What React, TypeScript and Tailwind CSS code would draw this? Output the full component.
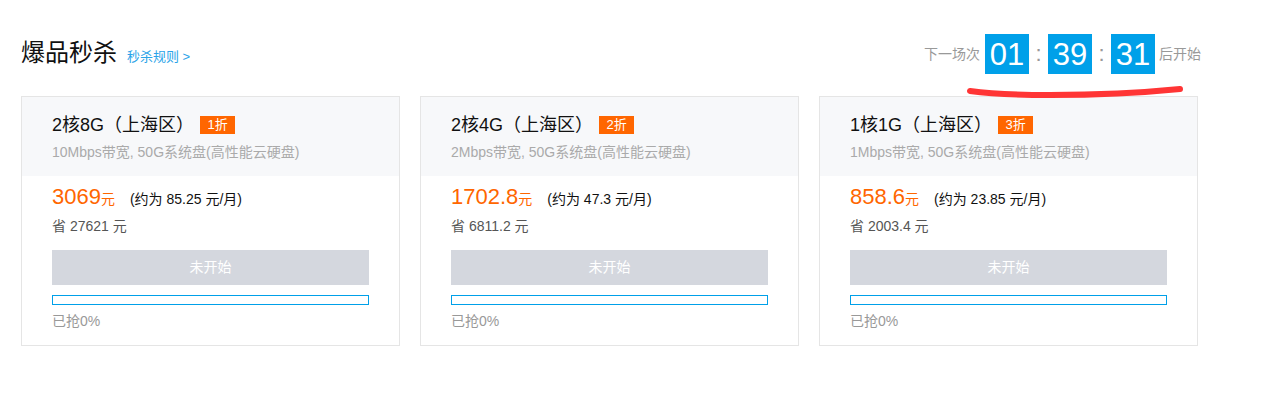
import React from 'react'

interface Deal {
  title: string
  discount: string
  spec: string
  price: string
  monthly: string
  saved: string
}

const deals: Deal[] = [
  {
    title: '2核8G（上海区）',
    discount: '1折',
    spec: '10Mbps带宽, 50G系统盘(高性能云硬盘)',
    price: '3069',
    monthly: '(约为 85.25 元/月)',
    saved: '省 27621 元',
  },
  {
    title: '2核4G（上海区）',
    discount: '2折',
    spec: '2Mbps带宽, 50G系统盘(高性能云硬盘)',
    price: '1702.8',
    monthly: '(约为 47.3 元/月)',
    saved: '省 6811.2 元',
  },
  {
    title: '1核1G（上海区）',
    discount: '3折',
    spec: '1Mbps带宽, 50G系统盘(高性能云硬盘)',
    price: '858.6',
    monthly: '(约为 23.85 元/月)',
    saved: '省 2003.4 元',
  },
]

function TimeBox({ value }: { value: string }) {
  return (
    <div className="flex h-[40px] w-[44px] items-center justify-center bg-[#00a0e9] text-[31px] leading-none text-white">
      {value}
    </div>
  )
}

function Colon() {
  return <span className="w-[19px] text-center text-[22px] leading-none text-[#999]">:</span>
}

function DealCard({ deal }: { deal: Deal }) {
  return (
    <div className="w-[379px] border border-[#e5e5e5] bg-white">
      {/* Header */}
      <div className="h-[79px] bg-[#f7f8fa] px-[30px] pt-[16px]">
        <div className="flex h-[24px] items-center">
          <span className="text-[18px] text-[#111]">{deal.title}</span>
          <span className="ml-[6px] flex h-[18px] w-[35px] items-center justify-center bg-[#ff6600] text-[13px] text-white">
            {deal.discount}
          </span>
        </div>
        <div className="mt-[5px] h-[20px] text-[14px] leading-[20px] text-[#aaa]">{deal.spec}</div>
      </div>

      {/* Body */}
      <div className="px-[30px] pb-[14px] pt-[6px]">
        <div className="flex h-[30px] items-baseline">
          <span className="text-[22px] leading-[30px] text-[#ff6600]">{deal.price}</span>
          <span className="text-[14px] text-[#ff6600]">元</span>
          <span className="ml-[15px] text-[14px] text-[#111]">{deal.monthly}</span>
        </div>
        <div className="mt-[4px] h-[20px] text-[14px] leading-[20px] text-[#555]">{deal.saved}</div>
        <div className="mt-[14px] flex h-[35px] items-center justify-center bg-[#d4d7de] text-[14px] text-white">
          未开始
        </div>
        <div className="mt-[10px] h-[10px] border border-[#00a0e9]" />
        <div className="mt-[6px] h-[20px] text-[14px] leading-[20px] text-[#999]">已抢0%</div>
      </div>
    </div>
  )
}

export default function App() {
  return (
    <div
      className="relative h-[401px] w-[1265px] bg-white pl-[21px] pt-[34px]"
      style={{ fontFamily: '"Liberation Sans", "Noto Sans CJK SC", sans-serif' }}
    >
      {/* Header */}
      <div className="flex h-[40px] w-[1180px] items-center justify-between">
        <div className="flex items-baseline">
          <h1 className="text-[24px] leading-none text-[#111]">爆品秒杀</h1>
          <a className="ml-[10px] text-[13px] text-[#2aa3e8]">秒杀规则 &gt;</a>
        </div>
        <div className="flex items-center">
          <span className="mr-[5px] text-[14px] text-[#999]">下一场次</span>
          <TimeBox value="01" />
          <Colon />
          <TimeBox value="39" />
          <Colon />
          <TimeBox value="31" />
          <span className="ml-[4px] text-[14px] text-[#999]">后开始</span>
        </div>
      </div>

      {/* Cards */}
      <div className="mt-[22px] flex gap-[20px]">
        {deals.map((deal) => (
          <DealCard key={deal.title} deal={deal} />
        ))}
      </div>

      {/* red marker annotation */}
      <svg className="pointer-events-none absolute left-0 top-0" width="1265" height="401">
        <path
          d="M970 91 Q 1000 95 1050 95 Q 1120 95 1180 89"
          fill="none"
          stroke="#ff3535"
          strokeWidth="6"
          strokeLinecap="round"
        />
      </svg>
    </div>
  )
}
